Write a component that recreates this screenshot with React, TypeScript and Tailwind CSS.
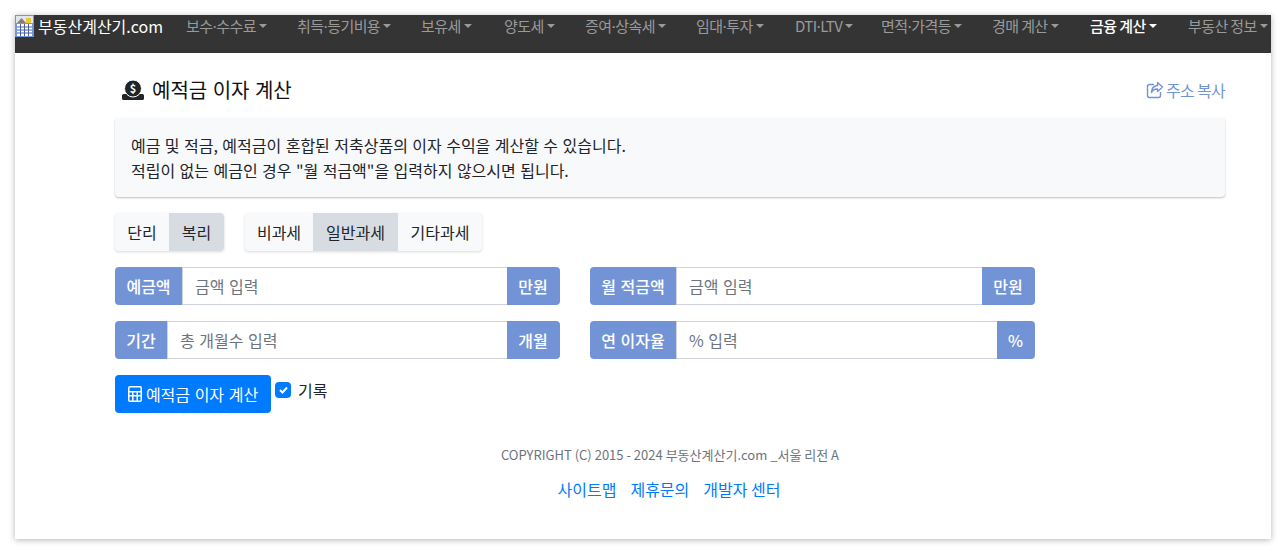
const navItems = [
	{ label: "보수·수수료", width: "w-[111px]" },
	{ label: "취득·등기비용", width: "w-[124px]" },
	{ label: "보유세", width: "w-[83px]" },
	{ label: "양도세", width: "w-[81px]" },
	{ label: "증여·상속세", width: "w-[111px]" },
	{ label: "임대·투자", width: "w-[99px]" },
	{ label: "DTI·LTV", width: "w-[86px]" },
	{ label: "면적·가격등", width: "w-[111px]" },
	{ label: "경매 계산", width: "w-[98px]" },
	{ label: "금융 계산", width: "w-[98px]", active: true },
	{ label: "부동산 정보", width: "w-[98px]" },
];

function Logo() {
	return (
		<svg width="19" height="22" viewBox="0 0 19 22" className="shrink-0">
			<rect width="19" height="22" fill="#7396d8" />
			<rect x="1" y="1" width="17" height="7" fill="#dfe6f2" />
			<path d="M2 8 L6.5 3 L11 8Z" fill="#8a7f6a" />
			<rect x="11" y="3" width="5" height="5" fill="#e8c83a" />
			<rect x="2" y="9" width="15" height="12" fill="#fff" />
			<path d="M2 12h15M2 15h15M2 18h15M5.500 9v12M9.500 9v12M13.500 9v12" stroke="#4a5f9c" strokeWidth="1" />
		</svg>
	);
}

function NavLabel({ label }: { label: string }) {
	const [head, tail] = label.split("·");
	if (tail === undefined) return <span className="whitespace-nowrap">{label}</span>;
	return (
		<span className="whitespace-nowrap">
			{head}
			<span className="-mx-[2px]">·</span>
			{tail}
		</span>
	);
}

function InputRow({
	label,
	placeholder,
	unit,
	labelWidth,
	unitWidth = "w-[53px]",
}: {
	label: string;
	placeholder: string;
	unit: string;
	labelWidth: string;
	unitWidth?: string;
}) {
	return (
		<div className="flex h-[38px] w-[445px] text-[16px] [word-spacing:1px]">
			<span
				className={`${labelWidth} flex shrink-0 items-center justify-center rounded-l bg-[#7294d6] font-medium text-white`}
			>
				{label}
			</span>
			<div className="flex min-w-0 flex-1 items-center border-y border-l border-[#ced4da] bg-white px-3 text-[#6c757d]">
				{placeholder}
			</div>
			<span
				className={`${unitWidth} flex shrink-0 items-center justify-center rounded-r bg-[#7294d6] pr-[1px] font-medium text-white`}
			>
				{unit}
			</span>
		</div>
	);
}

function ToggleGroup({ items, active }: { items: { label: string; width: string }[]; active: string }) {
	return (
		<div className="flex h-[38px] overflow-hidden rounded bg-[#f8f9fa] text-[16px] shadow-[0_1px_3px_rgba(0,0,0,0.15)]">
			{items.map(({ label, width }) => (
				<span
					key={label}
					className={`${width} flex items-center justify-center text-[#212529] ${label === active ? "bg-[#d7dce2]" : ""}`}
				>
					{label}
				</span>
			))}
		</div>
	);
}

export default function App() {
	return (
		<div
			className="h-[554px] overflow-hidden bg-white p-[15px]"
			style={{ fontFamily: '"Noto Sans CJK KR", "Noto Sans", sans-serif' }}
		>
			<div className="h-[524px] w-[1256px] bg-white shadow-[0_1px_6px_rgba(0,0,0,0.3)]">
				{/* Navbar */}
				<nav className="flex h-[38px] items-start overflow-hidden bg-[#343434]">
					<div className="flex h-[22px] w-[171px] shrink-0 items-center">
						<Logo />
						<span className="ml-1 text-[16px] leading-[22px] text-white">부동산계산기.com</span>
					</div>
					{navItems.map(({ label, width, active }) => (
						<div
							key={label}
							className={`${width} flex h-[22px] shrink-0 items-center text-[15px] tracking-[-0.6px] ${active ? "font-medium text-white" : "text-[#9a9a9a]"}`}
						>
							<NavLabel label={label} />
							<span
								className={`ml-[3px] h-0 w-0 border-x-[4px] border-t-[4px] border-x-transparent ${active ? "border-t-white" : "border-t-[#9a9a9a]"}`}
							/>
						</div>
					))}
				</nav>

				<main className="ml-[100px] w-[1110px]">
					{/* Title */}
					<div className="flex h-[65px] items-center justify-between pt-[8px]">
						<div className="flex items-center gap-[8px]">
							<svg width="22" height="20" viewBox="0 0 22 20" className="ml-[7px]" fill="#212529">
								<path d="M0 15.500a1.500 1.500 0 0 1 1.500-1.500h19a1.500 1.500 0 0 1 1.500 1.500V18.500a1.500 1.500 0 0 1-1.500 1.500H1.500A1.500 1.500 0 0 1 0 18.500z" />
								<circle cx="11" cy="8.500" r="8.500" stroke="#fff" strokeWidth="1" />
								<text x="11" y="12.500" textAnchor="middle" fontSize="11" fontWeight="700" fill="#fff">
									$
								</text>
							</svg>
							<h1 className="text-[20px] leading-[24px] text-[#111] [word-spacing:1px]">예적금 이자 계산</h1>
						</div>
						<a className="flex items-center gap-[2px] text-[16px] tracking-[-0.7px] text-[#7294d6]">
							<svg
								width="18"
								height="18"
								viewBox="0 0 18 18"
								fill="none"
								stroke="#7294d6"
								strokeWidth="1.400"
							>
								<path d="M8 3.500H3.500a2 2 0 0 0-2 2v9a2 2 0 0 0 2 2h9a2 2 0 0 0 2-2V11" />
								<path d="M11.500 1.500 16.500 6l-5 4.500V8c-3 0-5 1-6 3.500 0-4 2-6.500 6-7z" strokeLinejoin="round" />
							</svg>
							주소 복사
						</a>
					</div>

					{/* Description */}
					<div className="h-[79px] rounded bg-[#f8f9fa] px-4 pt-[15px] text-[16px] leading-[24.5px] text-[#212529] shadow-[0_1px_2px_rgba(0,0,0,0.25)] [word-spacing:0.85px]">
						<p>예금 및 적금, 예적금이 혼합된 저축상품의 이자 수익을 계산할 수 있습니다.</p>
						<p>적립이 없는 예금인 경우 "월 적금액"을 입력하지 않으시면 됩니다.</p>
					</div>

					{/* Toggles */}
					<div className="mt-4 flex gap-[21px]">
						<ToggleGroup
							active="복리"
							items={[
								{ label: "단리", width: "w-[54px]" },
								{ label: "복리", width: "w-[55px]" },
							]}
						/>
						<ToggleGroup
							active="일반과세"
							items={[
								{ label: "비과세", width: "w-[68px]" },
								{ label: "일반과세", width: "w-[85px]" },
								{ label: "기타과세", width: "w-[84px]" },
							]}
						/>
					</div>

					{/* Inputs */}
					<div className="mt-4 grid w-[920px] grid-cols-[445px_445px] gap-x-[30px] gap-y-4">
						<InputRow label="예금액" placeholder="금액 입력" unit="만원" labelWidth="w-[67px]" />
						<InputRow label="월 적금액" placeholder="금액 임력" unit="만원" labelWidth="w-[86px]" />
						<InputRow label="기간" placeholder="총 개월수 입력" unit="개월" labelWidth="w-[52px]" />
						<InputRow label="연 이자율" placeholder="% 입력" unit="%" labelWidth="w-[86px]" unitWidth="w-[38px]" />
					</div>

					{/* Submit */}
					<div className="mt-4 flex items-start">
						<button className="flex h-[38px] w-[156px] items-center justify-center gap-[4px] rounded bg-[#007bff] text-[16px] text-white [word-spacing:1px]">
							<svg width="14" height="16" viewBox="0 0 14 16" fill="#fff">
								<path
									fillRule="evenodd"
									d="M2 0h10a2 2 0 0 1 2 2v12a2 2 0 0 1-2 2H2a2 2 0 0 1-2-2V2a2 2 0 0 1 2-2zm0 1.500a.500.500 0 0 0-.500.500v3h11V2a.500.500 0 0 0-.500-.500zM1.500 6.500V9H4V6.500zm4 0V9h3V6.500zm4.500 0V9h2.500V6.500zM1.500 10.500V14a.500.500 0 0 0 .500.500h2v-4zm4 0v4h3v-4zm4.500 0v4h2a.500.500 0 0 0 .500-.500v-3.500z"
								/>
							</svg>
							예적금 이자 계산
						</button>
						<div className="ml-[4px] mt-[7px] flex h-4 w-4 items-center justify-center rounded-[4px] bg-[#007bff]">
							<svg width="9" height="8" viewBox="0 0 9 8" fill="none" stroke="#fff" strokeWidth="2">
								<path d="M1 4l2.500 2.500L8 1.500" />
							</svg>
						</div>
						<span className="ml-[7px] mt-[4px] text-[16px] leading-[22px] text-[#212529]">기록</span>
					</div>

					{/* Footer */}
					<div className="mt-[33px] text-center">
						<p className="text-[13px] leading-[18px] text-[#6c757d]">COPYRIGHT (C) 2015 - 2024 부동산계산기.com _서울 리전 A</p>
						<div className="mt-[14px] flex justify-center gap-[14px] pr-[2px] text-[16px] leading-[22px] text-[#007bff]">
							<a>사이트맵</a>
							<a>제휴문의</a>
							<a>개발자 센터</a>
						</div>
					</div>
				</main>
			</div>
		</div>
	);
}
